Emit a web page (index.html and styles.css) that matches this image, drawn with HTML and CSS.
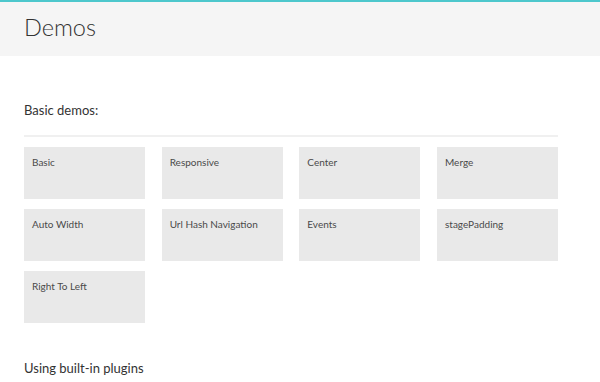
FILE: index.html
```html
<!DOCTYPE html>
<html>
<head>
<meta charset="utf-8">
<link rel="stylesheet" href="styles.css">
</head>
<body>
<header class="title-bar">
  <h1 class="title">Demos</h1>
</header>
<main class="content">
  <h3 class="section-title">Basic demos:</h3>
  <div class="rule"></div>
  <div class="grid">
    <a class="tile">Basic</a>
    <a class="tile">Responsive</a>
    <a class="tile">Center</a>
    <a class="tile">Merge</a>
    <a class="tile">Auto Width</a>
    <a class="tile">Url Hash Navigation</a>
    <a class="tile">Events</a>
    <a class="tile">stagePadding</a>
    <a class="tile">Right To Left</a>
  </div>
  <h3 class="section-title plugins">Using built-in plugins</h3>
</main>
</body>
</html>
```
FILE: styles.css
```css
html, body {
  margin: 0;
  padding: 0;
  background: #fff;
  font-family: Lato, "Open Sans", sans-serif;
  color: #333;
}
.title-bar {
  background: #f5f5f5;
  border-top: 2px solid #4dc7cc;
  height: 54px;
  display: flex;
  align-items: center;
  padding-left: 24px;
}
.title {
  margin: 0;
  font-weight: 300;
  font-size: 23.5px;
  color: #333;
  line-height: 1;
  padding-bottom: 2px;
}
.content {
  padding: 0 42px 0 24px;
}
.section-title {
  margin: 0;
  font-weight: 400;
  font-size: 13px;
  line-height: 20px;
  padding-top: 44px;
  color: #333;
}
.rule {
  height: 2px;
  background: #f0f0f0;
  margin-top: 15px;
  margin-bottom: 10px;
}
.grid {
  display: grid;
  grid-template-columns: repeat(4, 1fr);
  column-gap: 16.67px;
  row-gap: 10px;
}
.tile {
  display: block;
  height: 52px;
  background: #e9e9e9;
  padding: 8px 8px;
  box-sizing: border-box;
  font-size: 10px;
  line-height: 14px;
  color: #4a4a4a;
}
.section-title.plugins {
  padding-top: 0;
  margin-top: 35px;
}
```
